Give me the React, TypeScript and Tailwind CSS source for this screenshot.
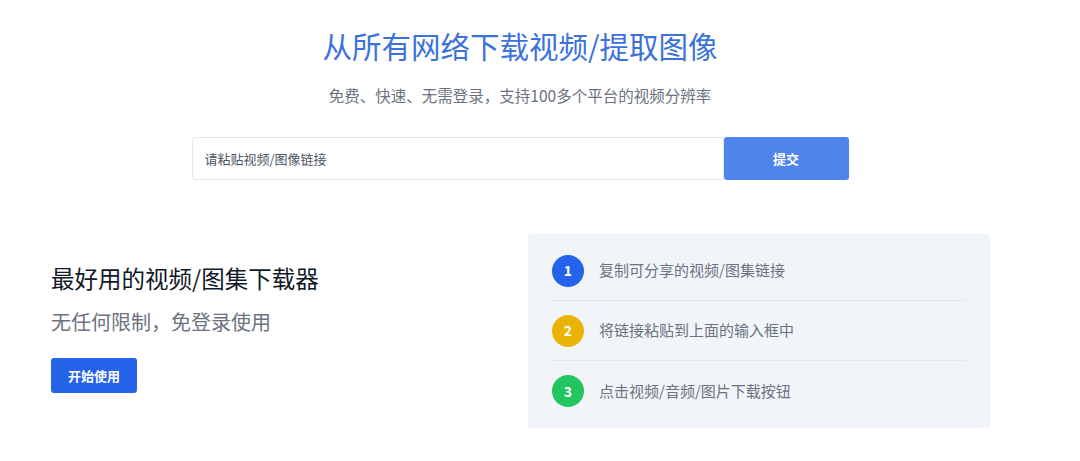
const font = {
  fontFamily: '"Noto Sans CJK SC", "Noto Sans", sans-serif',
};

const steps = [
  { n: "1", text: "复制可分享的视频/图集链接", color: "bg-[#2563eb]" },
  { n: "2", text: "将链接粘贴到上面的输入框中", color: "bg-[#eab308]" },
  { n: "3", text: "点击视频/音频/图片下载按钮", color: "bg-[#22c55e]" },
];

export default function App() {
  return (
    <div className="h-[461px] w-[1080px] bg-white" style={font}>
      <div className="w-[1040px]">
        <section className="flex flex-col items-center pt-[23px]">
          <h1 className="text-[29.5px] leading-[44px] font-normal text-[#3b72dc]">
            从所有网络下载视频/提取图像
          </h1>
          <p className="mt-[18px] text-[15.5px] leading-[20px] text-[#6b7280]">
            免费、快速、无需登录，支持100多个平台的视频分辨率
          </p>
          <form
            className="mt-[32px] flex h-[43px] w-[657px]"
            onSubmit={(e) => e.preventDefault()}
          >
            <input
              type="text"
              placeholder="请粘贴视频/图像链接"
              className="h-full flex-1 rounded-l-[3px] border border-[#e5e7eb] bg-white px-3 text-[13px] text-[#374151] outline-none placeholder:text-[#4b5563]"
            />
            <button
              type="submit"
              className="h-full w-[125px] rounded-[3px] bg-[#4f84ec] text-[13px] font-bold text-white"
            >
              提交
            </button>
          </form>
        </section>

        <section className="mt-[54px] flex items-start pl-[51px]">
          <div className="w-[477px] pt-[29px]">
            <h2 className="text-[23.5px] leading-[30px] text-[#111827]">
              最好用的视频/图集下载器
            </h2>
            <p className="mt-[15px] text-[20px] leading-[28px] text-[#6b7280]">
              无任何限制，免登录使用
            </p>
            <button className="mt-[22px] h-[35px] w-[86px] rounded-[3px] bg-[#2563eb] text-[13px] font-bold text-white">
              开始使用
            </button>
          </div>
          <div className="w-[462px] rounded-[3px] bg-[#f1f5f9] px-[24px] py-[7px]">
            {steps.map((s, i) => (
              <div
                key={s.n}
                className={`flex h-[60px] items-center gap-[15px] ${
                  i < steps.length - 1 ? "border-b border-[#e2e8f0]" : ""
                }`}
              >
                <span
                  className={`flex h-[32px] w-[32px] items-center justify-center rounded-full text-[14px] font-bold text-white ${s.color}`}
                >
                  {s.n}
                </span>
                <span className="text-[15px] text-[#6b7280]">{s.text}</span>
              </div>
            ))}
          </div>
        </section>
      </div>
    </div>
  );
}
